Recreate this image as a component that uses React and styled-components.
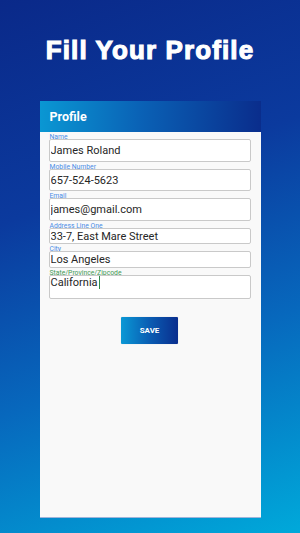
import React from "react";
import styled, { createGlobalStyle } from "styled-components";

const GlobalStyle = createGlobalStyle`
  html, body {
    margin: 0;
    padding: 0;
  }
  body {
    font-family: Roboto, "Liberation Sans", sans-serif;
  }
`;

const fields = [
  { label: "Name", value: "James Roland", height: 23 },
  { label: "Mobile Number", value: "657-524-5623", height: 22 },
  { label: "Email", value: "james@gmail.com", height: 23 },
  { label: "Address Line One", value: "33-7, East Mare Street", height: 16 },
  { label: "City", value: "Los Angeles", height: 17 },
];

const App = () => (
  <Page>
    <GlobalStyle />
    <Title>Fill Your Profile</Title>
    <Card>
      <CardHeader>Profile</CardHeader>
      <Form>
        {fields.map(f => (
          <Field key={f.label}>
            <Label>{f.label}</Label>
            <Input h={f.height} defaultValue={f.value} readOnly />
          </Field>
        ))}
        <Field>
          <Label active>State/Province/Zipcode</Label>
          <ActiveBox>
            California
            <Caret />
          </ActiveBox>
        </Field>
        <SaveButton type="button">SAVE</SaveButton>
      </Form>
    </Card>
  </Page>
);

const Page = styled.div`
  min-height: 533px;
  box-sizing: border-box;
  padding: 35px 0 0;
  display: flex;
  flex-direction: column;
  align-items: center;
  background: linear-gradient(160deg, #0a2989 0%, #0b3a9e 35%, #0768bd 65%, #00a9da 100%);
`;

const Title = styled.h1`
  margin: 0;
  height: 30px;
  line-height: 30px;
  font-family: "Liberation Sans", Arial, sans-serif;
  font-weight: 700;
  font-size: 26px;
  letter-spacing: 1.1px;
  color: #fff;
  -webkit-text-stroke: 1.1px #fff;
`;

const Card = styled.div`
  margin-top: 36px;
  width: 221px;
  height: 417px;
  box-sizing: border-box;
  background: #f9f9f9;
  border-bottom: 1px solid #9fb4da;
  display: flex;
  flex-direction: column;
`;

const CardHeader = styled.div`
  height: 31px;
  padding-left: 10px;
  display: flex;
  align-items: center;
  background: linear-gradient(90deg, #0a97d3 0%, #0a62b6 45%, #0a2d8c 100%);
  color: #fff;
  font-weight: 700;
  font-size: 12.5px;
`;

const Form = styled.div`
  display: flex;
  flex-direction: column;
  gap: 2px;
  padding: 2px 10px 0 9px;
`;

const Field = styled.div`
  display: flex;
  flex-direction: column;
`;

const Label = styled.span`
  height: 5px;
  line-height: 6px;
  padding-left: 1px;
  font-size: 6.8px;
  color: ${p => (p.active ? "#3f9a55" : "#4a8ce6")};
  white-space: nowrap;
`;

const Input = styled.input`
  height: ${p => p.h}px;
  box-sizing: border-box;
  width: 100%;
  margin: 0;
  padding: 0 0 0 1px;
  border: 1px solid #c9c9c9;
  border-radius: 2px;
  background: #fff;
  font-family: Roboto, "Liberation Sans", sans-serif;
  font-size: 11px;
  color: #262626;
  outline: none;
`;

const ActiveBox = styled.div`
  height: 24px;
  box-sizing: border-box;
  padding: 0 0 0 1px;
  border: 1px solid #c9c9c9;
  border-radius: 2px;
  background: #fff;
  font-size: 11px;
  line-height: 13px;
  color: #262626;
  display: flex;
  align-items: flex-start;
`;

const Caret = styled.span`
  width: 1px;
  height: 13px;
  margin-left: 1px;
  background: #2e8b4a;
`;

const SaveButton = styled.button`
  align-self: center;
  margin-top: 16px;
  width: 57px;
  height: 27px;
  border: none;
  border-radius: 1px;
  background: linear-gradient(90deg, #0a98d5 0%, #0a5db3 50%, #0a2e8e 100%);
  box-shadow: 0 0 1px rgba(0, 0, 0, 0.25);
  color: #fff;
  font-family: Roboto, "Liberation Sans", sans-serif;
  font-weight: 700;
  font-size: 8px;
  padding: 0;
`;

export default App;
